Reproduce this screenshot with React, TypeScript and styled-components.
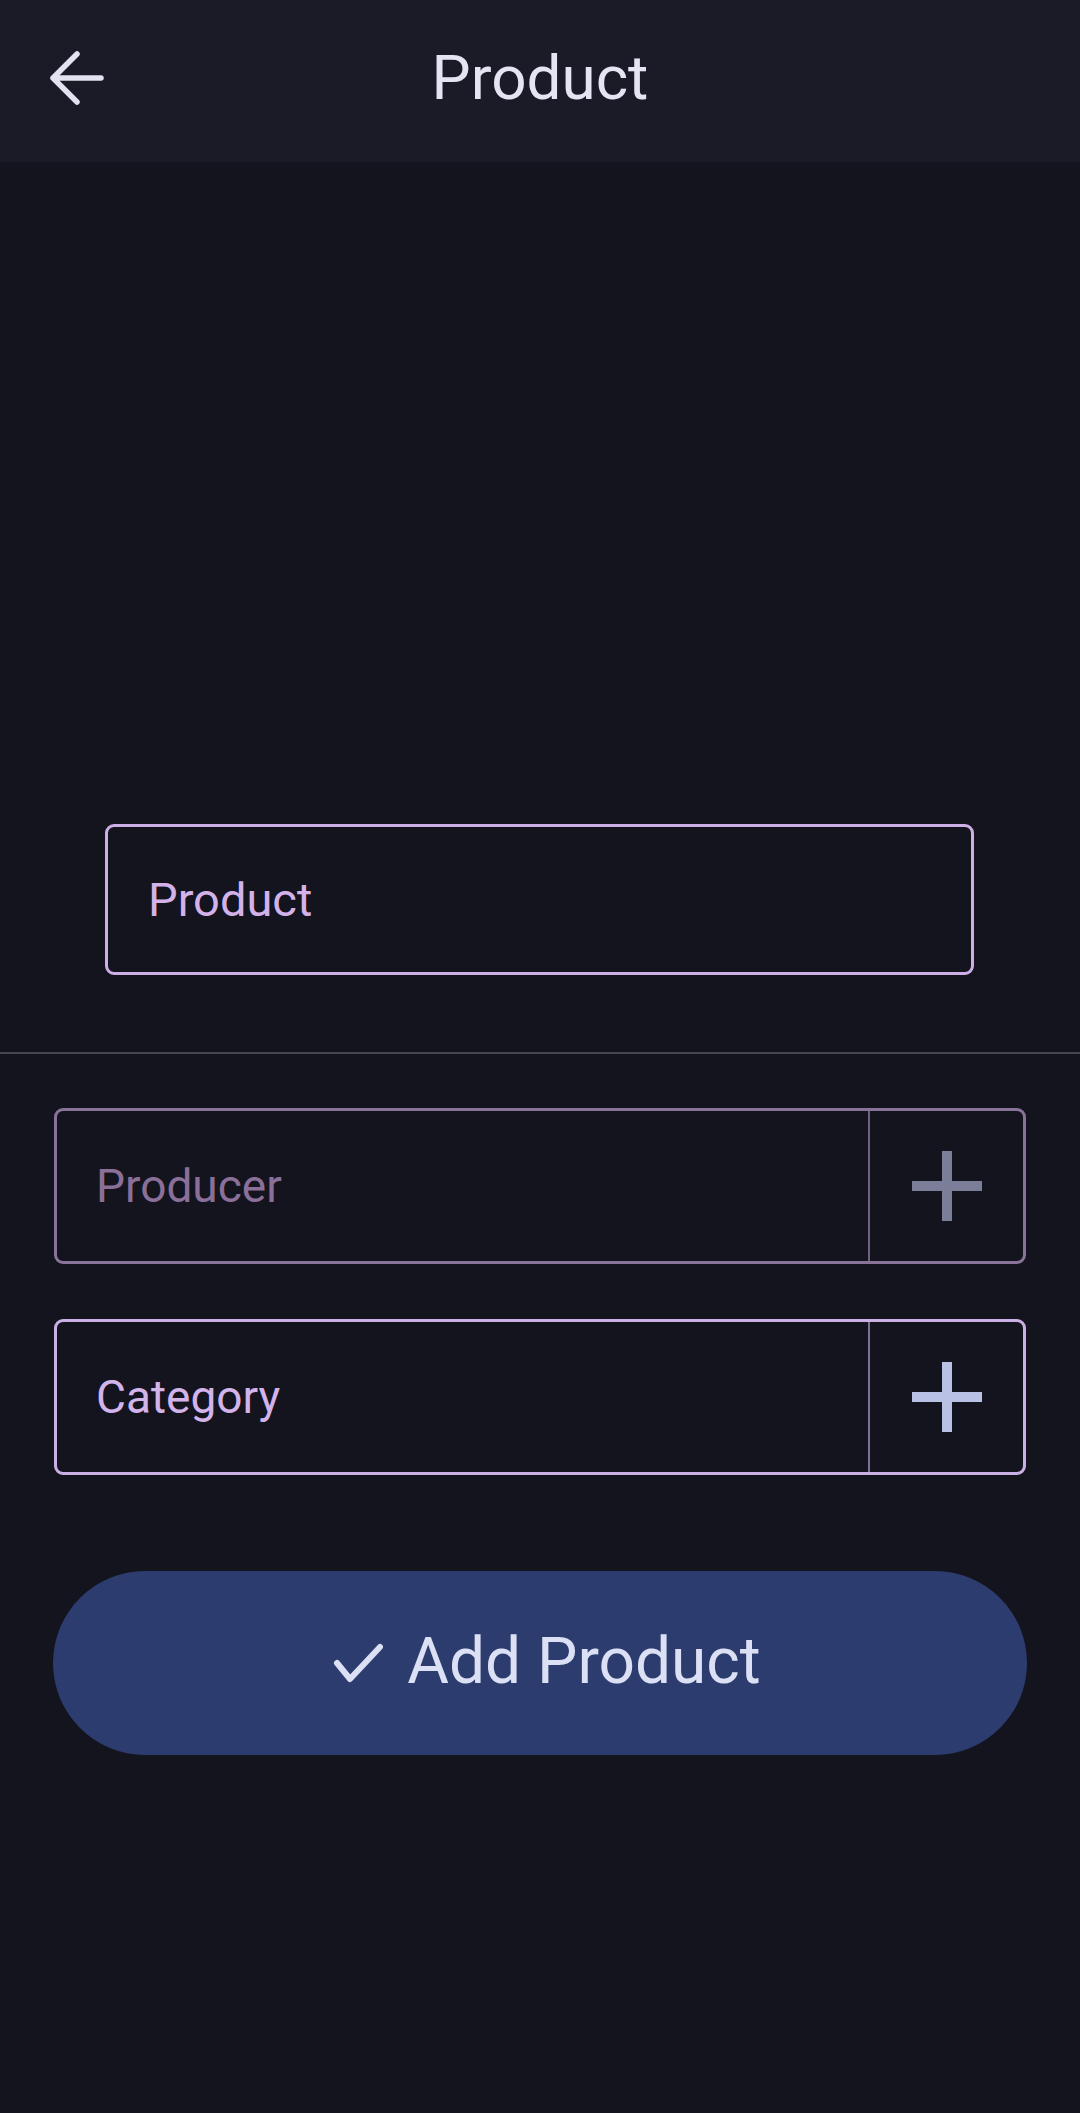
import React from "react";
import styled, { createGlobalStyle } from "styled-components";

const Global = createGlobalStyle`
  * { box-sizing: border-box; }
  html, body { margin: 0; padding: 0; background: #14141e; }
  body { font-family: Roboto, "Noto Sans", "Liberation Sans", sans-serif; }
  #root { min-height: 2113px; }
`;

const Page = styled.div`
  min-height: 2113px;
  background: #14141e;
  display: flex;
  flex-direction: column;
`;

const Header = styled.header`
  height: 162px;
  background: #1a1b26;
  display: grid;
  grid-template-columns: 1fr auto 1fr;
  align-items: center;
`;

const BackButton = styled.button`
  justify-self: start;
  margin-left: 44px;
  margin-top: -6px;
  width: 64px;
  height: 64px;
  padding: 0;
  border: none;
  background: transparent;
  display: flex;
  align-items: center;
  justify-content: center;
  color: #e2e2f0;
`;

const Title = styled.h1`
  margin: -8px 0 0;
  font-size: 62px;
  font-weight: 400;
  color: #e4e4f2;
  letter-spacing: 0;
`;

const Content = styled.main`
  display: flex;
  flex-direction: column;
`;

const ProductField = styled.div`
  margin: 662px 106px 0 105px;
  height: 151px;
  border: 3px solid #cdaee6;
  border-radius: 9px;
  display: flex;
  align-items: center;
  padding-left: 40px;
  font-size: 47px;
  color: #d3b2ea;
`;

const Divider = styled.hr`
  margin: 77px 0 0;
  border: none;
  height: 2px;
  background: #46464e;
`;

const Form = styled.div`
  display: flex;
  flex-direction: column;
  gap: 55px;
  margin: 54px 54px 0;
`;

const PickerRow = styled.div<{ $active?: boolean }>`
  height: 156px;
  border: 3px solid ${(p) => (p.$active ? "#cbb0e6" : "#8a7399")};
  border-radius: 9px;
  display: flex;
  align-items: stretch;
`;

const PickerLabel = styled.div<{ $active?: boolean }>`
  flex: 1;
  display: flex;
  align-items: center;
  padding-left: 39px;
  font-size: 46px;
  color: ${(p) => (p.$active ? "#d2b3ea" : "#8a7099")};
`;

const AddButton = styled.div<{ $active?: boolean }>`
  width: 155px;
  border-left: 2px solid ${(p) => (p.$active ? "#7e7092" : "#6f5f80")};
  display: flex;
  align-items: center;
  justify-content: center;
  color: ${(p) => (p.$active ? "#b9c1e5" : "#7a7e98")};
`;

const SubmitButton = styled.button`
  margin: 96px 53px 0;
  height: 184px;
  border: none;
  border-radius: 92px;
  background: #2c3c6e;
  color: #dce0f4;
  display: flex;
  align-items: center;
  justify-content: center;
  gap: 24px;
  font-family: Roboto, "Noto Sans", "Liberation Sans", sans-serif;
  font-size: 64px;
  font-weight: 400;
  padding: 0 0 0 14px;
`;

const ButtonText = styled.span`
  margin-top: -4px;
`;

const ArrowIcon = () => (
  <svg width="56" height="56" viewBox="0 0 56 56" fill="none">
    <path
      d="M53 28H5M29 4L5 28l24 24"
      stroke="currentColor"
      strokeWidth="5.5"
      strokeLinecap="round"
      strokeLinejoin="round"
    />
  </svg>
);

const PlusIcon = () => (
  <svg width="70" height="70" viewBox="0 0 70 70">
    <rect x="30" y="0" width="10" height="70" fill="currentColor" />
    <rect x="0" y="30" width="70" height="10" fill="currentColor" />
  </svg>
);

const CheckIcon = () => (
  <svg width="50" height="40" viewBox="0 0 50 40" fill="none">
    <path
      d="M4 20L17 36L47 4"
      stroke="currentColor"
      strokeWidth="6"
      strokeLinecap="round"
      strokeLinejoin="round"
    />
  </svg>
);

export default function App() {
  return (
    <>
      <Global />
      <Page>
        <Header>
          <BackButton aria-label="Back">
            <ArrowIcon />
          </BackButton>
          <Title>Product</Title>
          <span />
        </Header>
        <Content>
          <ProductField>Product</ProductField>
          <Divider />
          <Form>
            <PickerRow>
              <PickerLabel>Producer</PickerLabel>
              <AddButton>
                <PlusIcon />
              </AddButton>
            </PickerRow>
            <PickerRow $active>
              <PickerLabel $active>Category</PickerLabel>
              <AddButton $active>
                <PlusIcon />
              </AddButton>
            </PickerRow>
          </Form>
          <SubmitButton>
            <CheckIcon />
            <ButtonText>Add Product</ButtonText>
          </SubmitButton>
        </Content>
      </Page>
    </>
  );
}
